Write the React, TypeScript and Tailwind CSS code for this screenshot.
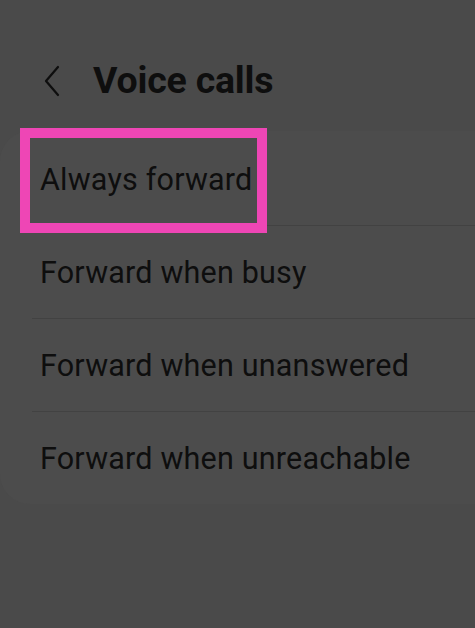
import React from "react";

const items = [
	"Always forward",
	"Forward when busy",
	"Forward when unanswered",
	"Forward when unreachable",
];

export default function App(): React.JSX.Element {
	return (
		<div
			className="relative h-[628px] w-[475px] overflow-hidden bg-[#4a4a4a] text-[#0e0e0e]"
			style={{ fontFamily: "Roboto, 'Noto Sans', sans-serif" }}
		>
			<header className="flex h-[131px] items-center pt-[30px]">
				<button className="ml-[36px] flex h-[44px] w-[32px] items-center justify-center">
					<svg width="20" height="32" viewBox="0 0 20 32" fill="none">
						<path
							d="M16 2 L4 16 L16 30"
							stroke="#0e0e0e"
							strokeWidth="2.2"
							strokeLinecap="round"
							strokeLinejoin="round"
						/>
					</svg>
				</button>
				<h1 className="ml-[25px] text-[37.5px] font-bold leading-none tracking-[-0.2px]">
					Voice calls
				</h1>
			</header>

			<div className="ml-0 mr-[-40px] h-[373px] rounded-[30px] bg-[#4c4c4c] pt-[2px]">
				{items.map((item, i) => (
					<div key={item} className="flex h-[93px] flex-col">
						<div className="flex flex-1 items-center pl-[40px] pt-[2px] text-[30.5px] leading-none tracking-[0.2px]">
							{item}
						</div>
						{i < items.length - 1 && (
							<div className="ml-[32px] h-px bg-[#424242]" />
						)}
					</div>
				))}
			</div>

			{/* highlight */}
			<div className="absolute left-[20px] top-[128px] h-[105px] w-[247px] border-[10px] border-[#ee46b5]" />
		</div>
	);
}
